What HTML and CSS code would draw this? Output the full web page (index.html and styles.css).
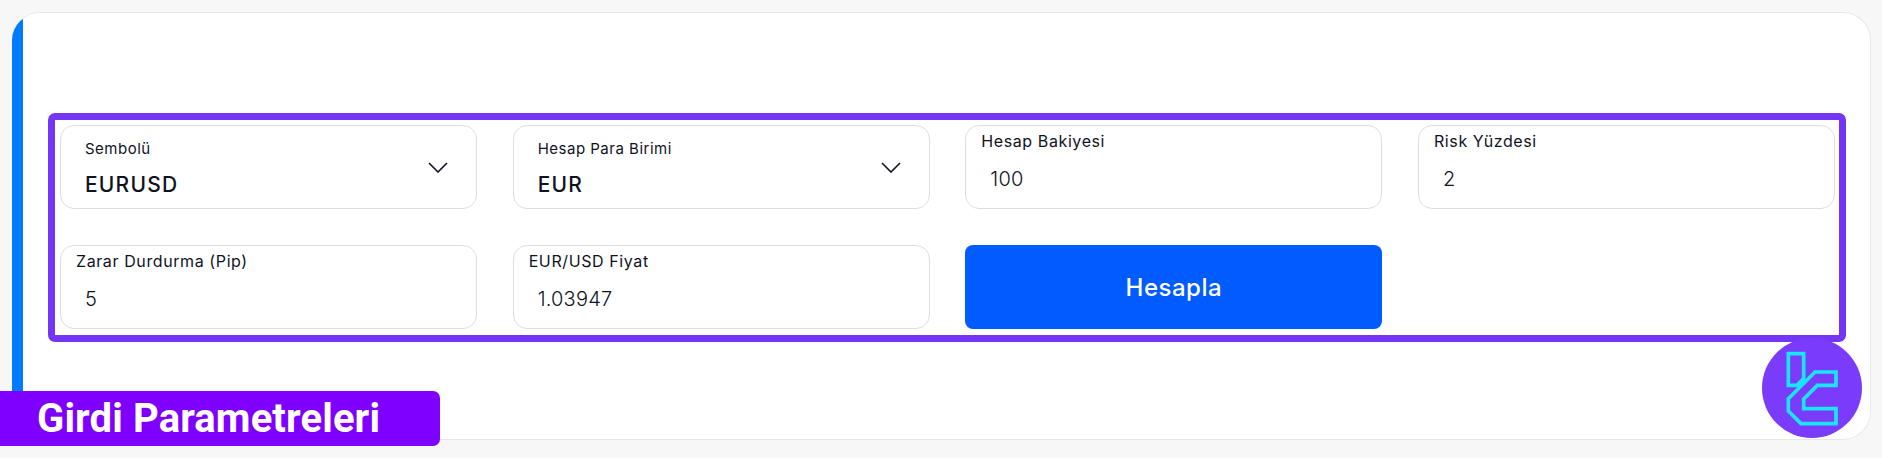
FILE: index.html
```html
<!DOCTYPE html>
<html lang="tr">
<head>
    <meta charset="UTF-8">
    <meta name="viewport" content="width=device-width, initial-scale=1.0">
    <title>Girdi Parametreleri</title>
    <link rel="stylesheet" href="styles.css">
</head>
<body>
    <div class="card">
        <div class="card-bar"></div>
        <form class="params">
            <div class="field select-field">
                <div>
                    <span class="select-label">Sembolü</span>
                    <span class="select-value">EURUSD</span>
                </div>
                <svg class="chevron" viewBox="0 0 20 11"><path d="M1 1l9 9 9-9"/></svg>
            </div>
            <div class="field select-field">
                <div>
                    <span class="select-label">Hesap Para Birimi</span>
                    <span class="select-value">EUR</span>
                </div>
                <svg class="chevron" viewBox="0 0 20 11"><path d="M1 1l9 9 9-9"/></svg>
            </div>
            <div class="field input-field">
                <label for="balance">Hesap Bakiyesi</label>
                <input type="text" id="balance" value="100">
            </div>
            <div class="field input-field">
                <label for="risk">Risk Yüzdesi</label>
                <input type="text" id="risk" value="2">
            </div>
            <div class="field input-field">
                <label for="stopLoss">Zarar Durdurma (Pip)</label>
                <input type="text" id="stopLoss" value="5">
            </div>
            <div class="field input-field">
                <label for="price">EUR/USD Fiyat</label>
                <input type="text" id="price" value="1.03947">
            </div>
            <button type="button" class="submit">Hesapla</button>
        </form>
    </div>

    <div class="caption">Girdi Parametreleri</div>

    <svg class="logo" viewBox="186 53 300 300">
        <circle cx="336" cy="203" r="150" fill="#7b3bfb"/>
        <path d="M265 100H311V175L291 195H265Z"/>
        <path d="M345 155H408V195H352L311 236V265H408V310H303L265 272V235Z"/>
    </svg>
</body>
</html>
```

FILE: styles.css
```css
* {
    box-sizing: border-box;
}
body {
    margin: 0;
    height: 458px;
    padding: 12px 11px 18px 12px;
    background-color: #f7f7f7;
    color: #10131f;
    font-family: Inter, "Open Sans", sans-serif;
    overflow: hidden;
}
.card {
    display: flex;
    height: 428px;
    background-color: #fff;
    border: 1px solid #e8e8e8;
    border-left: none;
    border-radius: 28px;
    overflow: hidden;
}
.card-bar {
    flex: none;
    width: 11px;
    background-color: #007bff;
}

/* Purple frame round the form */
.params {
    flex: 1;
    display: grid;
    grid-template-columns: repeat(4, 417px);
    grid-auto-rows: 84px;
    gap: 36px 35.67px;
    height: 229px;
    margin: 100px 24px 0 25px;
    padding: 5px 3px 6px 5px;
    border: 7px solid #7435f5;
    border-radius: 7px;
}

.field {
    border: 1px solid #dedede;
    border-radius: 14px;
}
.select-field {
    display: flex;
    justify-content: space-between;
    align-items: center;
    padding: 0 29px 0 24px;
}
.select-label {
    display: block;
    font-size: 15px;
    letter-spacing: 0.5px;
    margin-top: 2px;
    margin-bottom: 14px;
}
.select-value {
    display: block;
    font-size: 21px;
    font-weight: 500;
    letter-spacing: 1.2px;
}
.chevron {
    position: relative;
    left: 1px;
    width: 20px;
    height: 11px;
    fill: none;
    stroke: #10131f;
    stroke-width: 1.6;
}

.input-field {
    padding: 5px 15px 0 15px;
}
.input-field label {
    display: block;
    font-size: 16px;
    letter-spacing: 0.6px;
}
.input-field input {
    display: block;
    width: 100%;
    margin-top: 16px;
    padding: 0 9px;
    border: none;
    outline: none;
    background: none;
    color: #10131f;
    font-family: inherit;
    font-size: 20px;
    font-weight: 300;
    letter-spacing: 0.2px;
}

.submit {
    border: none;
    border-radius: 8px;
    background-color: #005cff;
    color: #fff;
    font-family: inherit;
    font-size: 24px;
    font-weight: 500;
    letter-spacing: 0.5px;
    cursor: pointer;
}

.caption {
    position: absolute;
    left: 0;
    top: 391px;
    width: 440px;
    height: 55px;
    padding-left: 37px;
    background-color: #7f00ff;
    border-radius: 0 7px 7px 0;
    color: #fff;
    font-family: Roboto, sans-serif;
    font-size: 40px;
    font-weight: 700;
    letter-spacing: 0.13px;
    line-height: 55px;
}

.logo {
    position: absolute;
    left: 1762px;
    top: 338px;
    width: 100px;
    height: 100px;
    fill: none;
    stroke: #19e6fe;
    stroke-width: 11;
}
.logo circle {
    stroke: none;
}
```
